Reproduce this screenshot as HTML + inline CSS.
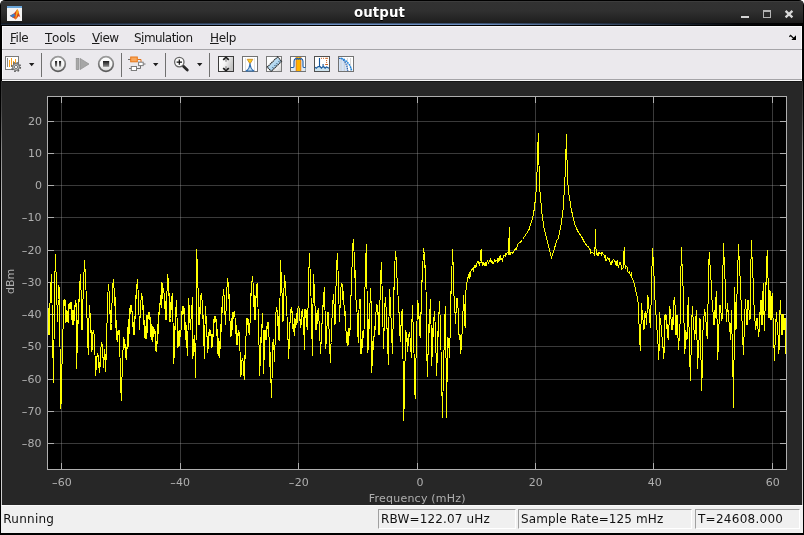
<!DOCTYPE html>
<html><head><meta charset="utf-8"><title>output</title><style>
html,body{margin:0;padding:0;}
body{width:804px;height:535px;overflow:hidden;background:#fff;position:relative;font-family:"DejaVu Sans","Liberation Sans",sans-serif;}
#win{will-change:transform;position:absolute;left:0;top:0;width:804px;height:535px;background:#000;border-radius:5px 5px 0 0;overflow:hidden;}
#title{position:absolute;left:1px;top:1px;width:802px;height:22px;background:linear-gradient(#484848 0,#323232 1px,#303030 10px,#222 19px,#1b1b1b 22px);}
#tline{position:absolute;left:1px;top:23px;width:802px;height:1px;background:linear-gradient(to right,rgba(63,86,118,.3) 0,rgba(63,86,118,1) 40%,rgba(63,86,118,1) 60%,rgba(63,86,118,.05) 92%,rgba(63,86,118,0) 100%);}
#tline2{position:absolute;left:1px;top:24px;width:802px;height:1px;background:linear-gradient(to right,rgba(110,143,192,.3) 0,rgba(110,143,192,1) 40%,rgba(110,143,192,1) 60%,rgba(110,143,192,.05) 92%,rgba(110,143,192,0) 100%);}
#ttext{position:absolute;left:0;top:5.4px;text-shadow:0 1px 0 #000;width:804px;text-align:center;color:#fff;font-weight:bold;font-size:13.33px;line-height:16px;letter-spacing:0.1px;text-indent:-45px}
#menu{position:absolute;left:2px;top:26px;width:800px;height:23px;background:#ebe9ed;box-shadow:inset 1px 1px 0 #f8f8fa,inset -1px 0 0 #f8f8fa;}
#menuline{position:absolute;left:2px;top:49px;width:800px;height:1px;background:#a5a4a8;}
.mi{position:absolute;top:5px;font-size:12px;line-height:14px;color:#1a1a1a;white-space:pre;}
.mi u{text-decoration:underline;text-underline-offset:1px;}
#tb{position:absolute;left:2px;top:50px;width:800px;height:29px;background:#ebe9ed;box-shadow:inset 1px 0 0 #f8f8fa,inset -1px 0 0 #f8f8fa;}
#tbline{position:absolute;left:2px;top:79px;width:800px;height:1px;background:#a5a4a8;}
#tbline2{position:absolute;left:2px;top:80px;width:800px;height:1px;background:#f8f8f8;}
.sep{position:absolute;top:3px;width:1px;height:24px;background:#707070;}
#panel{position:absolute;left:2px;top:81px;width:800px;height:424px;background:#272727;border-top:1px solid #161616;box-sizing:border-box}
#pl{position:absolute;left:1px;top:81px;width:1px;height:424px;background:linear-gradient(#2c2c2c 0,#484848 30px,#8a8a8a 70px,#c4c4c4 130px,#d0d0d0 180px,#d0d0d0 100%);}
#pr{position:absolute;left:802px;top:81px;width:1px;height:424px;background:linear-gradient(#2c2c2c 0,#484848 30px,#8a8a8a 70px,#c4c4c4 130px,#d0d0d0 180px,#d0d0d0 100%);}
#status{position:absolute;left:1px;top:505px;width:802px;height:28px;background:#f0f0f0;border-top:1px solid #fafafa;box-sizing:border-box;}
.sb{position:absolute;top:3px;height:20px;box-sizing:border-box;border:1px solid;border-color:#a0a0a0 #fff #fff #a0a0a0;font-size:12px;line-height:14px;color:#111;white-space:pre;padding:2px 0 0 2px;}
#run{position:absolute;left:2.3px;top:6px;font-size:12px;line-height:14px;color:#111;letter-spacing:0.25px}
svg{position:absolute;left:0;top:0;}
</style></head>
<body><div id="win">
<div id="title"></div><div id="tline"></div><div id="tline2"></div><div id="ttext">output</div>
<div id="menu">
<span class="mi" style="left:8px;letter-spacing:-0.45px"><u>F</u>ile</span>
<span class="mi" style="left:43px;font-kerning:none;letter-spacing:-0.25px"><u>T</u>ools</span>
<span class="mi" style="left:90px;letter-spacing:-0.45px"><u>V</u>iew</span>
<span class="mi" style="left:132px;letter-spacing:-0.55px">S<u>i</u>mulation</span>
<span class="mi" style="left:208px;letter-spacing:-0.3px"><u>H</u>elp</span>
</div><div id="menuline"></div>
<div id="tb">
<div class="sep" style="left:39px"></div><div class="sep" style="left:119px"></div><div class="sep" style="left:163px"></div><div class="sep" style="left:207px"></div>
</div><div id="tbline"></div><div id="tbline2"></div>
<div id="panel"></div><div id="pl"></div><div id="pr"></div>
<svg width="804" height="535" viewBox="0 0 804 535" shape-rendering="crispEdges"><style>.tk{font-family:"DejaVu Sans","Liberation Sans",sans-serif;font-size:11px;fill:#afafaf;}</style><rect x="47" y="96" width="740" height="374" fill="#000"/><line x1="61.5" y1="96" x2="61.5" y2="469" stroke="#afafaf" stroke-opacity="0.33"/><line x1="180.5" y1="96" x2="180.5" y2="469" stroke="#afafaf" stroke-opacity="0.33"/><line x1="298.5" y1="96" x2="298.5" y2="469" stroke="#afafaf" stroke-opacity="0.33"/><line x1="417.5" y1="96" x2="417.5" y2="469" stroke="#afafaf" stroke-opacity="0.33"/><line x1="535.5" y1="96" x2="535.5" y2="469" stroke="#afafaf" stroke-opacity="0.33"/><line x1="653.5" y1="96" x2="653.5" y2="469" stroke="#afafaf" stroke-opacity="0.33"/><line x1="772.5" y1="96" x2="772.5" y2="469" stroke="#afafaf" stroke-opacity="0.33"/><line x1="47" y1="443.5" x2="786" y2="443.5" stroke="#afafaf" stroke-opacity="0.33"/><line x1="47" y1="411.5" x2="786" y2="411.5" stroke="#afafaf" stroke-opacity="0.33"/><line x1="47" y1="379.5" x2="786" y2="379.5" stroke="#afafaf" stroke-opacity="0.33"/><line x1="47" y1="346.5" x2="786" y2="346.5" stroke="#afafaf" stroke-opacity="0.33"/><line x1="47" y1="314.5" x2="786" y2="314.5" stroke="#afafaf" stroke-opacity="0.33"/><line x1="47" y1="282.5" x2="786" y2="282.5" stroke="#afafaf" stroke-opacity="0.33"/><line x1="47" y1="250.5" x2="786" y2="250.5" stroke="#afafaf" stroke-opacity="0.33"/><line x1="47" y1="217.5" x2="786" y2="217.5" stroke="#afafaf" stroke-opacity="0.33"/><line x1="47" y1="185.5" x2="786" y2="185.5" stroke="#afafaf" stroke-opacity="0.33"/><line x1="47" y1="153.5" x2="786" y2="153.5" stroke="#afafaf" stroke-opacity="0.33"/><line x1="47" y1="121.5" x2="786" y2="121.5" stroke="#afafaf" stroke-opacity="0.33"/><line x1="61.5" y1="96" x2="61.5" y2="103" stroke="#afafaf"/><line x1="61.5" y1="463" x2="61.5" y2="470" stroke="#afafaf"/><line x1="180.5" y1="96" x2="180.5" y2="103" stroke="#afafaf"/><line x1="180.5" y1="463" x2="180.5" y2="470" stroke="#afafaf"/><line x1="298.5" y1="96" x2="298.5" y2="103" stroke="#afafaf"/><line x1="298.5" y1="463" x2="298.5" y2="470" stroke="#afafaf"/><line x1="417.5" y1="96" x2="417.5" y2="103" stroke="#afafaf"/><line x1="417.5" y1="463" x2="417.5" y2="470" stroke="#afafaf"/><line x1="535.5" y1="96" x2="535.5" y2="103" stroke="#afafaf"/><line x1="535.5" y1="463" x2="535.5" y2="470" stroke="#afafaf"/><line x1="653.5" y1="96" x2="653.5" y2="103" stroke="#afafaf"/><line x1="653.5" y1="463" x2="653.5" y2="470" stroke="#afafaf"/><line x1="772.5" y1="96" x2="772.5" y2="103" stroke="#afafaf"/><line x1="772.5" y1="463" x2="772.5" y2="470" stroke="#afafaf"/><line x1="47" y1="443.5" x2="54" y2="443.5" stroke="#afafaf"/><line x1="780" y1="443.5" x2="787" y2="443.5" stroke="#afafaf"/><line x1="47" y1="411.5" x2="54" y2="411.5" stroke="#afafaf"/><line x1="780" y1="411.5" x2="787" y2="411.5" stroke="#afafaf"/><line x1="47" y1="379.5" x2="54" y2="379.5" stroke="#afafaf"/><line x1="780" y1="379.5" x2="787" y2="379.5" stroke="#afafaf"/><line x1="47" y1="346.5" x2="54" y2="346.5" stroke="#afafaf"/><line x1="780" y1="346.5" x2="787" y2="346.5" stroke="#afafaf"/><line x1="47" y1="314.5" x2="54" y2="314.5" stroke="#afafaf"/><line x1="780" y1="314.5" x2="787" y2="314.5" stroke="#afafaf"/><line x1="47" y1="282.5" x2="54" y2="282.5" stroke="#afafaf"/><line x1="780" y1="282.5" x2="787" y2="282.5" stroke="#afafaf"/><line x1="47" y1="250.5" x2="54" y2="250.5" stroke="#afafaf"/><line x1="780" y1="250.5" x2="787" y2="250.5" stroke="#afafaf"/><line x1="47" y1="217.5" x2="54" y2="217.5" stroke="#afafaf"/><line x1="780" y1="217.5" x2="787" y2="217.5" stroke="#afafaf"/><line x1="47" y1="185.5" x2="54" y2="185.5" stroke="#afafaf"/><line x1="780" y1="185.5" x2="787" y2="185.5" stroke="#afafaf"/><line x1="47" y1="153.5" x2="54" y2="153.5" stroke="#afafaf"/><line x1="780" y1="153.5" x2="787" y2="153.5" stroke="#afafaf"/><line x1="47" y1="121.5" x2="54" y2="121.5" stroke="#afafaf"/><line x1="780" y1="121.5" x2="787" y2="121.5" stroke="#afafaf"/><polyline fill="none" stroke="#ffff00" stroke-width="1" stroke-linejoin="miter" points="47.5,300.0 47.5,300.0 48.0,307.7 48.5,326.2 49.0,335.0 49.0,335.0 49.5,326.8 50.0,303.2 50.5,302.2 51.0,282.7 51.4,273.8 51.5,279.7 52.0,302.8 52.5,340.2 53.0,357.6 53.4,382.6 53.5,376.4 54.0,340.0 54.5,311.8 55.0,271.6 55.3,253.9 55.5,260.9 56.0,271.5 56.5,299.9 57.0,305.0 57.5,322.0 57.5,322.0 58.0,305.2 58.5,299.5 59.0,285.0 59.0,285.0 59.5,322.0 60.0,346.9 60.5,385.3 60.9,408.9 61.0,404.6 61.5,392.1 62.0,363.8 62.5,358.9 63.0,329.1 63.5,320.2 64.0,300.0 64.0,300.0 64.5,306.3 65.0,299.1 65.5,322.7 66.0,309.8 66.5,321.6 67.0,322.0 67.0,322.0 67.5,321.7 68.0,310.6 68.5,323.1 69.0,304.1 69.5,309.1 70.0,303.0 70.0,303.0 70.5,309.4 71.0,301.6 71.5,320.0 72.0,310.0 72.5,324.1 73.0,325.0 73.0,325.0 73.5,324.3 74.0,310.5 74.5,320.8 75.0,305.5 75.5,305.9 76.0,300.0 76.0,300.0 76.4,368.7 76.5,367.0 77.0,350.1 77.5,352.5 78.0,319.8 78.5,323.6 79.0,300.3 79.5,301.2 80.0,281.6 80.4,273.8 80.5,278.2 81.0,289.5 81.5,316.6 82.0,330.0 82.0,330.0 82.5,320.7 83.0,299.4 83.5,294.9 84.0,272.6 84.5,263.4 84.6,259.9 85.0,268.1 85.5,286.9 86.0,289.7 86.5,317.4 87.0,317.5 87.5,339.1 88.0,348.4 88.2,354.8 88.5,344.0 89.0,318.2 89.4,304.6 89.5,307.4 90.0,312.7 90.5,332.7 91.0,329.9 91.5,348.7 91.8,352.0 92.0,348.3 92.5,349.8 93.0,331.8 93.5,333.7 93.8,330.1 94.0,333.8 94.5,351.1 95.0,355.2 95.5,372.6 95.7,375.7 96.0,370.1 96.5,369.7 97.0,356.1 97.5,356.1 97.7,353.2 98.0,354.6 98.5,367.6 99.0,362.2 99.5,372.4 99.7,373.0 100.0,366.1 100.5,367.1 101.0,347.3 101.5,345.6 101.7,341.9 102.0,344.1 102.5,356.9 103.0,356.5 103.5,366.4 103.7,367.7 104.0,360.0 104.5,354.2 104.7,348.8 105.0,353.1 105.5,368.1 105.7,372.0 106.0,360.5 106.5,350.5 107.0,323.1 107.5,314.3 108.0,291.9 108.3,283.7 108.5,287.9 109.0,290.2 109.5,314.4 110.0,309.8 110.5,324.6 111.0,330.0 111.0,330.0 111.5,323.5 112.0,303.1 112.5,299.7 113.0,282.9 113.3,278.8 113.5,283.9 114.0,287.5 114.5,305.5 115.0,295.7 115.5,327.7 116.0,319.6 116.5,335.3 117.0,340.0 117.0,340.0 117.5,340.8 118.0,331.4 118.5,334.7 119.0,330.0 119.1,330.0 119.5,346.7 120.0,357.4 120.5,379.0 121.0,392.8 121.2,400.5 121.5,393.9 122.0,377.3 122.5,371.2 123.0,350.7 123.5,343.9 123.7,337.4 124.0,338.4 124.5,347.5 125.0,343.1 125.5,358.2 126.0,356.2 126.2,359.8 126.5,359.2 127.0,347.2 127.5,348.7 128.0,326.9 128.5,346.8 129.0,319.1 129.5,333.9 130.0,308.0 130.5,314.1 131.0,305.0 131.0,305.0 131.5,311.5 132.0,310.4 132.5,326.9 133.0,321.4 133.5,334.4 134.0,335.0 134.0,335.0 134.5,330.6 135.0,315.7 135.5,318.6 136.0,294.6 136.5,298.8 137.0,283.7 137.5,278.8 137.5,278.8 138.0,289.2 138.5,312.0 139.0,315.3 139.5,330.0 139.5,330.0 140.0,318.3 140.5,316.9 141.0,300.4 141.5,293.3 141.5,293.3 142.0,295.6 142.5,309.6 143.0,304.6 143.5,325.3 144.0,319.5 144.5,333.9 145.0,338.0 145.0,338.0 145.5,339.2 146.0,326.2 146.5,338.8 147.0,315.0 147.5,333.3 148.0,315.3 148.5,319.1 149.0,312.0 149.0,312.0 149.5,320.0 150.0,316.7 150.5,336.8 151.0,323.2 151.5,338.9 152.0,340.0 152.0,340.0 152.5,342.3 153.0,326.4 153.5,337.1 154.0,329.6 154.2,330.0 154.5,334.0 155.0,330.7 155.5,350.6 156.0,345.5 156.4,352.4 156.5,351.8 157.0,341.7 157.5,342.6 158.0,323.8 158.5,333.6 159.0,313.3 159.5,314.2 160.0,303.0 160.0,303.0 160.5,303.7 161.0,295.2 161.5,307.5 162.0,282.2 162.5,299.2 163.0,288.0 163.5,288.0 163.5,288.0 164.0,292.5 164.5,309.0 165.0,300.6 165.5,315.9 166.0,320.0 166.0,320.0 166.5,310.7 167.0,291.0 167.5,284.3 167.8,274.2 168.0,277.4 168.5,295.5 169.0,292.0 169.5,312.9 170.0,322.0 170.0,322.0 170.5,318.5 171.0,302.4 171.5,309.9 172.0,295.9 172.4,293.5 172.5,299.4 173.0,321.7 173.5,350.6 173.8,363.7 174.0,358.0 174.5,349.3 175.0,326.1 175.5,330.1 176.0,307.5 176.5,300.0 176.5,300.0 177.0,317.4 177.5,341.7 177.7,347.8 178.0,345.1 178.5,346.0 179.0,330.9 179.5,345.9 180.0,330.2 180.5,337.0 181.0,330.0 181.0,330.0 181.5,328.3 182.0,311.0 182.5,314.5 183.0,306.0 183.0,306.0 183.5,313.5 184.0,307.5 184.5,330.1 185.0,321.4 185.5,339.6 186.0,324.8 186.5,347.7 187.0,342.9 187.5,354.4 187.7,355.8 188.0,331.4 188.5,298.0 188.5,298.0 189.0,304.5 189.5,322.9 190.0,319.4 190.5,330.0 190.5,330.0 191.0,319.3 191.5,318.3 192.0,304.9 192.5,300.5 192.7,296.7 192.9,358.8 193.0,356.8 193.5,350.7 194.0,339.4 194.4,334.7 194.5,340.5 195.0,351.8 195.5,370.6 195.8,377.7 196.0,344.8 196.5,265.4 196.6,248.9 197.0,258.5 197.5,285.5 198.0,287.4 198.5,310.6 199.0,325.0 199.0,325.0 199.5,320.5 200.0,307.5 200.5,313.7 201.0,295.4 201.5,295.3 201.6,293.3 202.0,299.9 202.5,319.2 203.0,314.5 203.5,345.4 204.0,346.0 204.4,358.8 204.5,354.2 205.0,325.5 205.4,305.6 205.5,308.2 206.0,314.9 206.5,335.9 207.0,335.0 207.5,351.1 207.6,352.8 208.0,346.1 208.5,348.8 209.0,331.7 209.5,336.2 209.9,330.0 210.0,330.1 210.5,335.8 211.0,333.1 211.5,348.2 212.0,343.2 212.3,346.8 212.5,346.2 213.0,334.5 213.5,336.8 214.0,319.4 214.5,323.3 215.0,316.0 215.0,316.0 215.5,322.3 216.0,318.5 216.5,336.4 217.0,327.9 217.5,353.8 218.0,337.4 218.5,355.7 219.0,352.6 219.3,357.8 219.5,355.2 220.0,340.6 220.5,348.8 221.0,324.4 221.5,331.5 222.0,306.8 222.5,313.2 223.0,296.0 223.5,289.3 223.5,289.3 224.0,294.2 224.5,314.8 225.0,314.3 225.5,325.0 225.5,325.0 226.0,311.2 226.5,309.8 227.0,287.0 227.5,278.4 227.5,278.4 228.0,281.0 228.5,299.3 229.0,293.9 229.5,304.0 229.5,304.0 230.0,320.5 230.4,336.9 230.5,336.7 231.0,330.6 231.5,336.4 232.0,318.0 232.5,330.4 233.0,312.3 233.5,319.1 234.0,312.0 234.2,311.2 234.5,316.6 235.0,317.2 235.5,334.4 236.0,324.1 236.5,340.9 237.0,345.0 237.0,345.0 237.5,344.6 238.0,332.9 238.5,335.5 238.9,330.0 239.0,331.5 239.5,347.8 240.0,351.1 240.5,371.8 240.8,376.7 241.0,373.5 241.5,375.4 242.0,360.0 242.5,357.9 242.5,357.9 243.0,360.5 243.5,374.6 244.0,375.6 244.2,379.7 244.5,374.5 245.0,355.0 245.5,359.3 246.0,335.7 246.5,331.8 247.0,318.0 247.0,318.0 247.5,325.4 248.0,318.8 248.5,333.3 249.0,329.0 249.5,335.0 249.5,335.0 250.0,322.7 250.5,322.6 251.0,292.6 251.5,296.4 252.0,281.0 252.3,276.2 252.5,280.7 253.0,281.9 253.5,306.5 254.0,294.5 254.5,314.2 255.0,320.0 255.0,320.0 255.5,314.3 256.0,296.1 256.5,298.0 257.0,284.7 257.1,283.3 257.5,300.3 258.0,307.3 258.5,343.6 259.0,344.5 259.5,370.4 259.7,375.7 260.0,366.7 260.5,361.4 261.0,336.9 261.5,343.3 262.0,323.9 262.5,318.0 262.7,312.6 263.0,328.2 263.5,362.8 263.7,373.7 264.0,360.8 264.5,345.1 264.9,330.0 265.0,330.0 265.5,339.7 266.0,340.0 266.0,340.0 266.5,337.7 267.0,325.8 267.5,328.6 268.0,322.0 268.0,322.0 268.5,334.6 269.0,336.4 269.5,366.9 270.0,351.5 270.5,378.3 271.0,382.5 271.5,396.0 271.6,397.6 272.0,379.1 272.5,365.4 273.0,342.1 273.1,338.6 273.5,346.8 274.0,350.0 274.5,361.0 274.6,361.7 275.0,345.0 275.5,334.5 276.0,312.0 276.2,306.6 276.5,311.5 277.0,309.7 277.5,326.4 278.0,315.7 278.5,339.9 279.0,330.0 279.5,340.6 279.6,340.8 280.0,299.1 280.4,260.2 280.5,263.2 281.0,271.3 281.5,290.1 282.0,292.8 282.5,311.8 283.0,322.0 283.0,322.0 283.5,311.4 284.0,288.5 284.5,279.0 284.6,275.4 285.0,280.3 285.5,292.9 286.0,295.7 286.5,305.0 286.5,305.0 287.0,316.1 287.5,339.7 288.0,338.2 288.5,356.7 288.6,358.8 289.0,348.8 289.5,348.4 290.0,322.7 290.5,322.7 291.0,308.7 291.1,307.2 291.5,313.1 292.0,310.5 292.5,329.1 293.0,323.7 293.5,331.9 293.5,331.9 294.0,328.8 294.5,335.9 295.0,318.5 295.5,328.3 296.0,325.0 296.0,325.0 296.5,324.9 297.0,312.9 297.5,323.4 298.0,307.8 298.5,307.2 298.5,307.2 299.0,308.1 299.5,320.5 300.0,318.6 300.5,328.0 300.5,328.0 301.0,320.7 301.5,324.6 302.0,310.9 302.5,309.2 302.5,309.2 303.0,316.9 303.5,334.6 304.0,335.1 304.5,349.8 304.5,349.8 305.0,309.2 305.0,309.2 305.5,317.8 306.0,309.1 306.5,326.9 307.0,324.1 307.5,330.0 307.5,330.0 308.0,308.4 308.5,294.5 309.0,267.9 309.5,253.3 309.5,253.3 310.0,267.8 310.5,295.5 311.0,296.3 311.5,332.0 312.0,339.3 312.4,355.8 312.5,348.3 313.0,305.1 313.4,274.2 313.5,276.8 314.0,283.4 314.5,302.5 315.0,305.5 315.5,321.9 316.0,330.0 316.0,330.0 316.5,328.0 317.0,312.9 317.5,323.7 318.0,309.8 318.4,309.2 318.5,312.3 319.0,320.6 319.5,337.3 320.0,341.4 320.4,353.8 320.5,353.0 321.0,341.8 321.5,344.2 322.0,322.8 322.5,324.4 323.0,305.7 323.5,306.5 324.0,291.8 324.4,287.3 324.5,292.6 325.0,310.3 325.5,336.7 325.8,348.8 326.0,344.5 326.5,339.1 327.0,325.7 327.5,323.2 328.0,312.0 328.0,312.0 328.5,325.2 329.0,328.8 329.5,347.8 330.0,354.0 330.3,362.7 330.5,359.2 331.0,344.0 331.5,342.5 332.0,318.4 332.5,316.2 333.0,299.9 333.3,294.1 333.5,299.3 334.0,303.6 334.5,320.4 335.0,325.0 335.0,325.0 335.5,311.3 336.0,286.4 336.5,284.3 337.0,260.1 337.3,253.3 337.5,260.3 338.0,269.6 338.5,299.2 339.0,304.0 339.5,322.0 339.5,322.0 340.0,307.9 340.5,304.2 341.0,287.5 341.3,283.7 341.5,286.8 342.0,283.3 342.5,300.1 343.0,290.9 343.5,303.1 344.0,305.0 344.0,305.0 344.5,315.8 345.0,309.9 345.5,330.6 346.0,330.8 346.5,340.6 346.7,342.8 347.0,339.9 347.5,346.1 348.0,332.2 348.5,344.7 349.0,327.7 349.5,336.1 350.0,330.0 350.0,330.0 350.5,317.2 351.0,295.5 351.5,295.0 352.0,267.5 352.5,264.4 353.0,243.2 353.2,239.0 353.5,246.5 354.0,251.3 354.5,277.7 355.0,269.5 355.5,290.5 356.0,300.0 356.0,300.0 356.5,311.3 357.0,312.2 357.5,333.9 358.0,337.1 358.2,342.8 358.5,332.8 359.0,310.0 359.2,302.6 359.5,304.0 360.0,298.9 360.4,299.7 360.5,309.5 361.0,353.8 361.0,353.8 361.5,352.3 362.0,338.6 362.5,347.6 363.0,330.9 363.5,337.6 364.0,330.0 364.0,330.0 364.5,315.5 365.0,287.1 365.5,276.8 366.0,253.8 366.3,243.9 366.5,258.6 367.0,289.3 367.5,328.5 367.9,352.8 368.0,350.3 368.5,341.7 369.0,319.1 369.5,329.4 370.0,303.2 370.5,298.4 370.9,287.7 371.0,301.0 371.5,372.7 371.5,372.7 372.0,364.2 372.5,365.9 373.0,341.3 373.5,350.4 374.0,336.6 374.5,335.0 374.5,335.0 375.0,326.5 375.5,329.9 376.0,312.4 376.5,311.0 376.9,303.6 377.0,304.4 377.5,315.2 378.0,311.5 378.5,331.2 379.0,335.0 379.0,335.0 379.5,321.1 380.0,300.1 380.5,292.7 381.0,270.5 381.3,262.2 381.5,271.3 382.0,284.0 382.5,318.0 383.0,327.3 383.5,348.8 383.5,348.8 384.0,331.6 384.5,324.1 385.0,303.7 385.3,296.7 385.5,302.2 386.0,306.6 386.5,328.8 387.0,326.9 387.5,349.8 388.0,354.4 388.4,364.7 388.5,357.8 389.0,316.9 389.4,288.7 389.5,291.7 390.0,296.8 390.5,317.3 391.0,317.3 391.5,341.4 392.0,342.5 392.4,353.8 392.5,350.7 393.0,329.1 393.5,322.0 394.0,287.8 394.5,288.7 395.0,261.1 395.4,250.9 395.5,253.5 396.0,256.8 396.5,276.0 397.0,278.2 397.5,290.0 397.5,290.0 398.0,295.4 398.5,313.0 399.0,311.1 399.5,332.7 400.0,336.3 400.2,341.8 400.5,338.4 401.0,325.5 401.5,323.9 402.0,311.3 402.2,308.6 402.5,331.1 403.0,359.3 403.5,400.9 403.8,421.0 404.0,409.8 404.5,392.7 405.0,361.4 405.5,343.7 405.8,330.0 406.0,331.9 406.5,342.1 407.0,337.7 407.5,350.4 407.7,351.8 408.0,346.3 408.5,345.8 409.0,334.6 409.5,332.3 409.5,332.3 410.0,337.3 410.5,350.4 411.0,351.6 411.3,357.8 411.5,348.5 412.0,319.4 412.3,304.6 412.5,312.4 413.0,321.6 413.5,350.8 414.0,352.9 414.5,380.9 415.0,394.7 415.1,398.6 415.5,385.9 416.0,358.3 416.5,354.3 417.0,320.7 417.5,308.8 417.7,299.7 418.0,302.1 418.5,319.3 419.0,315.0 419.5,333.3 420.0,335.7 420.1,337.9 420.5,329.7 421.0,311.9 421.5,313.8 422.0,280.0 422.5,281.8 423.0,260.8 423.5,253.5 423.7,247.9 424.0,251.8 424.5,267.8 425.0,264.6 425.5,282.8 426.0,290.0 426.0,290.0 426.5,329.4 427.0,360.6 427.2,376.7 427.5,372.2 428.0,354.2 428.5,355.4 429.0,324.2 429.5,333.3 430.0,308.9 430.5,301.8 430.6,298.7 431.0,323.5 431.5,359.4 431.6,365.7 432.0,356.5 432.5,356.0 433.0,328.0 433.5,337.3 434.0,317.2 434.5,312.8 434.6,310.6 435.0,321.2 435.5,345.0 436.0,352.8 436.5,372.8 436.6,375.7 437.0,362.9 437.5,359.6 438.0,330.9 438.5,336.6 439.0,312.1 439.5,303.9 439.6,300.6 440.0,314.2 440.5,344.7 441.0,349.6 441.5,384.9 442.0,395.7 442.5,418.0 442.5,418.0 443.0,391.6 443.5,379.2 444.0,350.5 444.5,330.0 444.5,330.0 445.0,314.5 445.5,308.6 445.6,305.6 446.0,358.1 446.4,418.0 446.5,413.7 447.0,383.2 447.5,362.5 447.9,337.1 448.0,337.6 448.5,347.0 449.0,347.7 449.5,357.8 449.5,357.8 450.0,338.3 450.5,329.8 451.0,291.9 451.5,292.8 452.0,265.6 452.5,249.3 452.5,249.3 453.0,261.1 453.5,283.9 454.0,296.0 454.0,296.0 454.5,307.8 455.0,313.1 455.5,323.9 455.5,323.9 456.0,311.6 456.5,313.0 457.0,298.5 457.1,297.7 457.5,307.9 458.0,307.9 458.5,327.2 459.0,335.0 459.0,335.0 459.5,339.6 460.0,334.4 460.5,354.0 461.0,339.5 461.5,350.4 461.9,348.8 462.0,334.0 462.0,334.0 462.7,318.3 463.4,302.7 463.5,294.7 463.7,297.0 464.2,307.2 464.9,323.0 465.1,327.9 465.1,327.9 465.6,306.8 466.0,290.0 466.3,287.2 467.0,281.9 467.5,280.1 467.8,277.3 468.5,275.4 469.2,278.8 469.9,271.6 470.0,277.2 470.6,272.2 471.4,270.1 472.1,268.8 472.8,269.0 473.5,271.5 474.2,265.9 475.0,267.6 475.0,268.0 475.7,265.6 476.4,266.2 477.1,262.2 477.8,261.6 478.6,262.1 479.3,264.8 480.0,262.5 480.0,261.7 480.7,254.6 481.1,249.0 481.4,252.4 482.2,265.5 482.2,265.4 482.9,262.1 483.6,264.3 484.3,263.8 485.0,266.1 485.0,265.1 485.8,261.8 486.5,266.4 487.2,260.2 487.9,262.0 488.6,264.2 489.4,259.8 490.1,261.9 490.8,258.5 491.5,262.7 492.2,263.2 493.0,261.6 493.7,263.5 494.4,259.4 495.1,261.8 495.8,260.9 496.6,260.6 497.3,259.5 497.3,262.2 498.0,262.5 498.7,258.8 499.4,259.7 500.2,255.1 500.9,259.2 501.6,258.4 502.3,260.4 503.0,257.8 503.8,255.2 504.5,255.2 505.2,255.9 505.9,252.9 506.0,254.6 506.6,253.3 507.4,252.8 508.1,252.4 508.6,255.1 508.8,245.1 509.3,227.0 509.5,235.7 510.0,255.5 510.2,252.1 511.0,252.9 511.7,252.7 512.4,253.4 513.1,252.5 513.8,252.0 514.6,249.0 514.7,249.5 515.3,248.5 516.0,249.6 516.7,249.0 517.4,244.8 518.2,243.9 518.9,243.2 519.6,242.3 520.3,242.4 521.0,241.4 521.8,240.5 522.2,239.9 522.5,239.5 523.2,238.4 523.9,237.3 524.6,236.2 525.4,235.2 526.1,234.1 526.8,233.0 527.5,231.9 528.2,230.8 528.8,230.0 529.0,229.5 529.7,227.2 530.4,225.0 531.1,222.7 531.8,220.5 532.4,218.7 532.6,217.9 533.3,214.2 534.0,210.6 534.6,207.5 534.7,206.2 535.4,198.1 536.0,191.8 536.2,188.8 536.9,175.4 536.9,175.0 537.5,160.0 537.6,156.2 537.9,145.0 538.3,134.9 538.4,133.0 538.6,145.0 538.9,160.0 539.0,165.3 539.3,175.0 539.8,186.0 540.0,191.8 540.5,197.2 541.2,205.3 541.8,212.0 541.9,212.9 542.6,218.0 543.4,223.1 544.0,227.7 544.1,228.0 544.8,231.0 545.5,234.1 546.2,237.1 546.7,239.0 547.0,240.0 547.7,242.8 548.4,245.7 549.1,248.5 549.8,251.3 550.6,254.1 551.3,256.9 551.5,257.8 552.0,256.2 552.7,253.8 553.4,251.5 554.2,249.1 554.9,246.8 555.6,244.5 556.3,242.1 557.0,239.9 557.0,239.9 557.8,239.3 558.2,239.0 558.5,237.6 559.2,234.0 559.9,230.4 560.6,226.8 560.9,225.5 561.4,222.2 562.1,217.1 562.8,211.9 563.1,209.8 563.5,203.5 564.2,192.7 564.3,191.8 565.0,177.9 565.1,175.0 565.7,160.5 565.7,160.0 566.1,146.0 566.4,136.9 566.5,133.9 566.7,146.0 567.0,160.0 567.1,163.6 567.5,175.0 567.8,181.3 568.4,191.8 568.6,192.8 569.3,197.1 570.0,201.4 570.7,205.7 571.4,209.8 571.4,210.0 572.2,213.2 572.9,216.4 573.6,219.6 574.3,222.8 574.4,223.2 575.0,224.7 575.8,226.5 576.5,228.2 577.2,229.9 577.7,231.1 577.9,231.4 578.6,232.5 579.4,233.6 580.1,234.6 580.8,235.7 581.5,236.8 582.2,237.8 582.2,237.9 583.0,239.4 583.7,240.9 584.4,242.4 584.4,242.4 585.1,243.4 585.8,244.4 586.6,245.3 587.3,246.8 588.0,246.4 588.7,246.4 589.4,249.1 590.2,249.9 590.6,251.3 590.9,253.0 591.6,252.5 592.3,252.3 593.0,253.2 593.8,254.0 594.5,252.0 594.8,255.6 595.2,240.3 595.5,229.5 595.9,245.4 596.2,254.6 596.6,254.7 597.4,253.6 598.1,256.3 598.8,252.4 599.5,252.6 600.2,253.7 601.0,253.5 601.7,254.9 601.8,252.9 602.4,252.9 603.1,254.4 603.8,254.6 604.6,256.9 605.3,255.0 606.0,261.4 606.7,260.1 607.4,257.3 608.2,258.5 608.9,259.7 609.3,260.0 609.6,258.5 610.3,263.8 611.0,265.1 611.8,261.7 612.5,262.1 613.2,259.6 613.9,260.0 614.6,261.9 615.4,261.7 616.1,265.9 616.8,261.5 617.5,260.8 618.2,267.6 619.0,264.9 619.2,262.3 619.7,265.2 620.4,261.8 621.1,265.6 621.8,268.9 622.6,268.4 623.2,267.4 623.3,263.0 624.0,251.7 624.2,247.0 624.7,260.4 625.2,267.2 625.4,269.1 626.2,266.5 626.9,266.2 627.6,270.8 628.3,272.5 629.0,272.1 629.2,271.8 629.8,273.5 630.5,275.0 631.2,273.4 631.9,277.4 632.6,279.3 633.4,281.3 634.1,283.3 634.1,283.4 634.8,286.4 635.5,289.5 636.2,292.5 637.0,295.6 637.7,298.7 637.9,299.6 638.4,310.3 639.1,325.6 639.8,341.0 640.3,350.8 640.3,350.8 640.3,350.8 640.8,329.9 641.3,315.1 641.6,302.6 641.8,304.9 642.3,317.3 642.8,314.1 643.3,328.0 643.5,330.0 643.8,325.2 644.3,329.4 644.8,314.3 645.3,312.0 645.3,312.0 645.8,313.3 646.3,324.0 646.5,325.0 646.8,316.4 647.3,309.6 647.8,296.2 647.9,294.7 648.3,303.3 648.8,303.3 649.3,317.2 649.8,319.5 650.3,327.9 650.3,327.9 650.8,308.3 651.3,301.0 651.8,270.9 652.3,260.0 652.6,247.6 652.8,251.0 653.3,266.2 653.8,266.1 654.3,290.1 654.8,294.8 655.0,300.0 655.3,306.2 655.8,306.4 656.3,325.9 656.8,326.1 657.0,330.0 657.3,336.3 657.8,337.3 658.3,352.6 658.8,357.6 658.9,359.8 659.3,329.5 659.5,311.6 659.8,313.0 660.3,323.7 660.8,321.1 661.3,329.4 661.5,330.0 661.8,331.0 662.3,345.1 662.8,342.1 663.3,355.0 663.8,358.8 663.8,358.8 664.3,344.7 664.8,321.1 665.0,315.0 665.3,319.0 665.8,314.4 666.3,329.1 666.8,314.7 667.3,338.3 667.8,332.5 668.3,340.0 668.4,339.9 668.8,328.3 669.3,319.7 669.8,305.6 669.8,305.6 670.3,314.7 670.8,313.2 671.3,326.3 671.8,326.9 672.0,330.0 672.3,328.3 672.8,317.5 673.3,324.8 673.8,299.8 674.3,305.1 674.8,296.7 674.8,296.7 675.3,316.0 675.8,327.1 676.0,335.0 676.3,330.0 676.8,317.6 677.0,315.0 677.3,324.9 677.8,330.1 678.3,347.9 678.4,349.8 678.8,340.3 679.3,340.3 679.8,327.3 680.0,325.0 680.3,309.7 680.8,276.4 681.3,253.1 681.4,246.9 681.8,253.8 682.3,276.4 682.8,279.4 683.3,296.0 683.5,300.0 683.8,311.1 684.3,338.2 684.7,353.8 684.8,351.3 685.3,346.3 685.8,330.7 685.9,330.0 686.3,336.1 686.8,337.0 687.0,340.0 687.3,331.4 687.8,311.1 688.3,296.7 688.3,296.7 688.8,313.7 689.3,344.1 689.8,357.7 690.3,380.6 690.3,380.6 690.8,359.1 691.3,348.7 691.8,322.2 692.3,305.6 692.3,305.6 692.8,311.4 693.3,324.3 693.8,323.9 694.3,338.4 694.5,340.0 694.8,334.5 695.3,332.1 695.8,316.1 696.3,318.7 696.7,309.6 696.8,319.0 697.3,368.7 697.3,368.7 697.8,358.0 698.3,357.2 698.8,342.2 699.0,340.0 699.3,335.0 699.8,321.0 700.0,318.0 700.3,332.8 700.8,349.1 701.3,376.0 701.7,391.0 701.8,385.4 702.3,367.7 702.8,338.2 703.0,330.0 703.3,328.3 703.8,316.8 704.3,315.1 704.6,309.6 704.8,310.1 705.3,320.3 705.8,312.1 706.3,336.3 706.8,331.5 707.2,338.9 707.3,335.1 707.8,310.8 708.3,295.3 708.8,266.2 709.2,251.9 709.3,254.2 709.8,257.4 710.3,275.4 710.8,269.6 711.3,293.9 711.8,295.1 712.0,300.0 712.3,305.0 712.8,306.6 713.3,318.5 713.8,321.9 714.0,325.0 714.3,323.3 714.8,309.6 715.3,318.0 715.8,297.5 716.3,296.2 716.6,290.7 716.8,302.8 717.3,341.9 717.6,359.8 717.8,354.5 718.3,349.3 718.8,324.7 719.3,323.0 719.8,308.2 720.0,305.0 720.3,308.6 720.8,306.9 721.3,321.1 721.8,317.0 722.0,320.0 722.3,305.5 722.8,273.8 723.3,253.8 723.5,242.9 723.8,248.1 724.3,269.1 724.8,271.9 725.3,290.4 725.5,295.0 725.8,302.1 726.3,317.8 726.5,322.0 726.8,314.6 727.3,308.1 727.5,302.6 727.8,304.9 728.3,316.9 728.8,314.1 729.3,332.3 729.8,324.9 730.3,338.3 730.5,339.9 730.8,328.5 731.3,316.8 731.5,310.0 731.8,320.8 732.3,350.5 732.8,364.6 733.3,393.3 733.7,407.9 733.8,391.9 734.3,317.7 734.5,286.7 734.8,294.3 735.3,312.9 735.8,323.0 736.0,330.0 736.3,322.4 736.8,295.7 737.3,291.1 737.8,265.9 738.3,252.1 738.5,243.9 738.8,248.7 739.3,265.4 739.8,265.0 740.3,290.7 740.8,294.8 741.0,300.0 741.3,308.3 741.8,311.6 742.3,333.9 742.8,338.9 743.3,352.9 743.4,354.8 743.8,340.4 744.3,332.8 744.8,313.5 745.3,302.2 745.4,298.7 745.8,302.2 746.3,318.9 746.8,320.6 747.0,325.0 747.3,320.1 747.8,304.2 748.0,300.0 748.3,304.7 748.8,303.8 749.3,317.5 749.8,317.2 750.0,320.0 750.3,304.0 750.8,268.8 751.3,246.2 751.4,240.0 751.8,247.6 752.3,270.4 752.8,269.3 753.3,291.1 753.8,298.7 754.0,305.0 754.3,311.0 754.8,316.3 755.3,328.1 755.5,330.0 755.8,326.0 756.3,325.9 756.8,318.7 757.0,318.0 757.3,324.2 757.8,324.1 758.3,336.2 758.4,336.9 758.8,329.5 759.3,331.6 759.8,312.0 760.3,315.4 760.8,302.1 761.0,300.0 761.3,310.2 761.8,318.4 762.0,325.0 762.3,317.1 762.8,296.2 763.3,282.7 763.3,282.7 763.8,303.2 764.3,330.9 764.3,330.9 764.8,313.7 765.3,307.3 765.8,282.1 766.3,284.6 766.8,260.6 767.3,249.9 767.3,249.9 767.8,266.8 768.3,293.3 768.8,308.3 769.0,318.0 769.3,311.3 769.8,294.3 770.0,290.0 770.3,301.1 770.8,312.3 771.0,320.0 771.3,315.0 771.8,298.9 772.3,292.7 772.3,292.7 772.8,307.1 773.3,331.7 773.8,339.1 774.3,360.7 774.3,360.7 774.8,346.4 775.3,343.6 775.8,321.1 776.3,317.0 776.5,312.0 776.8,316.3 777.3,330.7 777.8,327.3 778.3,345.1 778.8,351.7 778.9,353.8 779.3,339.7 779.8,316.8 780.3,299.7 780.3,299.7 780.8,308.3 781.3,323.0 781.8,329.8 782.0,335.0 782.3,329.8 782.8,316.6 783.0,314.0 783.3,320.4 783.8,326.1 784.0,330.0 784.3,329.0 784.8,318.6 785.2,317.6 785.3,326.7 785.6,351.8 785.8,351.2 786.3,356.7"/><rect x="47.5" y="96.5" width="739" height="373" fill="none" stroke="#afafaf"/><text x="41.6" y="447.4" text-anchor="end" class="tk"><tspan textLength="6.1" lengthAdjust="spacingAndGlyphs">-</tspan>80</text><text x="41.6" y="415.4" text-anchor="end" class="tk"><tspan textLength="6.1" lengthAdjust="spacingAndGlyphs">-</tspan>70</text><text x="41.6" y="383.4" text-anchor="end" class="tk"><tspan textLength="6.1" lengthAdjust="spacingAndGlyphs">-</tspan>60</text><text x="41.6" y="350.4" text-anchor="end" class="tk"><tspan textLength="6.1" lengthAdjust="spacingAndGlyphs">-</tspan>50</text><text x="41.6" y="318.4" text-anchor="end" class="tk"><tspan textLength="6.1" lengthAdjust="spacingAndGlyphs">-</tspan>40</text><text x="41.6" y="286.4" text-anchor="end" class="tk"><tspan textLength="6.1" lengthAdjust="spacingAndGlyphs">-</tspan>30</text><text x="41.6" y="254.4" text-anchor="end" class="tk"><tspan textLength="6.1" lengthAdjust="spacingAndGlyphs">-</tspan>20</text><text x="41.6" y="221.4" text-anchor="end" class="tk"><tspan textLength="6.1" lengthAdjust="spacingAndGlyphs">-</tspan>10</text><text x="42.1" y="189.4" text-anchor="end" class="tk">0</text><text x="42.1" y="157.4" text-anchor="end" class="tk">10</text><text x="42.1" y="125.4" text-anchor="end" class="tk">20</text><text x="61.7" y="486" text-anchor="middle" class="tk"><tspan textLength="6.1" lengthAdjust="spacingAndGlyphs">-</tspan>60</text><text x="180.0" y="486" text-anchor="middle" class="tk"><tspan textLength="6.1" lengthAdjust="spacingAndGlyphs">-</tspan>40</text><text x="298.6" y="486" text-anchor="middle" class="tk"><tspan textLength="6.1" lengthAdjust="spacingAndGlyphs">-</tspan>20</text><text x="420.0" y="486" text-anchor="middle" class="tk">0</text><text x="535.7" y="486" text-anchor="middle" class="tk">20</text><text x="654.7" y="486" text-anchor="middle" class="tk">40</text><text x="772.8" y="486" text-anchor="middle" class="tk">60</text><text x="417.3" y="502" text-anchor="middle" class="tk" style="letter-spacing:0.22px">Frequency (mHz)</text><text transform="translate(13.9,281.4) rotate(-90)" text-anchor="middle" class="tk">dBm</text></svg>
<div id="status">
<div id="run">Running</div>
<div class="sb" style="left:377px;width:138px;letter-spacing:0.15px">RBW=122.07 uHz</div>
<div class="sb" style="left:517px;width:174px;letter-spacing:0.12px">Sample Rate=125 mHz</div>
<div class="sb" style="left:694px;width:105px;letter-spacing:0.27px">T=24608.000</div>
</div>
<svg width="804" height="535" viewBox="0 0 804 535" style="position:absolute;left:0;top:0">
<defs>
<linearGradient id="gbtn" x1="0" y1="0" x2="0" y2="1"><stop offset="0" stop-color="#ffffff"/><stop offset="0.6" stop-color="#f4f4f4"/><stop offset="1" stop-color="#d4d4d4"/></linearGradient>
<linearGradient id="gring" x1="0" y1="0" x2="0" y2="1"><stop offset="0" stop-color="#9c9c9c"/><stop offset="1" stop-color="#5c5c5c"/></linearGradient>
<linearGradient id="gsq" x1="0" y1="0" x2="0" y2="1"><stop offset="0" stop-color="#1a1a1a"/><stop offset="1" stop-color="#8a8a8a"/></linearGradient>
<linearGradient id="gbox" x1="0" y1="0" x2="1" y2="0.4"><stop offset="0" stop-color="#ffffff"/><stop offset="0.5" stop-color="#f6f6f6"/><stop offset="1" stop-color="#c4c4c4"/></linearGradient>
<linearGradient id="gbox2" x1="0" y1="0" x2="1" y2="1"><stop offset="0" stop-color="#ffffff"/><stop offset="0.6" stop-color="#fafafa"/><stop offset="1" stop-color="#cfcfcf"/></linearGradient>
<linearGradient id="grul" x1="0" y1="0" x2="1" y2="1"><stop offset="0" stop-color="#dceef9"/><stop offset="1" stop-color="#8cc4e8"/></linearGradient>
</defs>
<!-- 1 config icon -->
<rect x="5.5" y="56.5" width="13" height="13" fill="#fff" stroke="#7a7a7a"/>
<g shape-rendering="crispEdges"><rect x="7" y="58" width="1" height="9" fill="#8a8a8a"/><rect x="9" y="60" width="1" height="7" fill="#ffa51e"/><rect x="11" y="58" width="1" height="9" fill="#ffa51e"/><rect x="13" y="61" width="1" height="6" fill="#ffa51e"/><rect x="15" y="59" width="1" height="5" fill="#ffa51e"/></g>
<circle cx="16" cy="67" r="4.3" fill="none" stroke="#5e5e5e" stroke-width="1.6" stroke-dasharray="1.7 1.68"/>
<circle cx="16" cy="67" r="3.4" fill="#c6c6c6" stroke="#6a6a6a" stroke-width="1"/>
<circle cx="16" cy="67" r="1.6" fill="#fff" stroke="#606060" stroke-width="0.8"/>
<!-- dropdown arrows -->
<path d="M29 63h5.4l-2.7 3.2z M153 63h5.4l-2.7 3.2z M197 63h5.4l-2.7 3.2z" fill="#1e1e1e"/>
<!-- pause -->
<circle cx="58" cy="64" r="7.3" fill="url(#gbtn)" stroke="url(#gring)" stroke-width="1.7"/>
<rect x="55" y="61" width="2.1" height="5.6" fill="url(#gsq)"/><rect x="59" y="61" width="2.1" height="5.6" fill="url(#gsq)"/>
<!-- step -->
<rect x="76.2" y="58.4" width="2.5" height="11.2" fill="#a8a8a8" stroke="#8e8e8e" stroke-width="0.7"/>
<path d="M80 58.4L89 64L80 69.6z" fill="#a6a6a6" stroke="#8e8e8e" stroke-width="0.7"/>
<!-- stop -->
<circle cx="106" cy="64" r="7.3" fill="url(#gbtn)" stroke="url(#gring)" stroke-width="1.7"/>
<rect x="103" y="61" width="6.2" height="5.8" fill="url(#gsq)"/>
<!-- model icon -->
<g fill="none" stroke-width="1">
<path d="M128 59.5h3 M129 68.5h2.5 M143 64h2.5 M136.5 68.5h4v-3" stroke="#707070"/>
<path d="M137.5 59.5h3.5v3" stroke="#e0701a"/>
<rect x="130.7" y="57" width="6.6" height="4.8" fill="#f8a65a" stroke="#e8781a"/>
<rect x="138.6" y="62.2" width="4.6" height="3.4" fill="#fff" stroke="#7c7c7c"/>
<rect x="131.3" y="66.5" width="5.2" height="4" fill="#fff" stroke="#7c7c7c"/>
</g>
<!-- magnifier -->
<path d="M183.4 66.2L187.3 70" stroke="#2a2a2a" stroke-width="2.8" stroke-linecap="round"/>
<circle cx="179.3" cy="62.1" r="4.7" fill="#fbfbfb" stroke="#666" stroke-width="1.3"/>
<path d="M176.6 62.1h5.4 M179.3 59.4v5.4" stroke="#111" stroke-width="1.2"/>
<!-- icon A: autoscale -->
<rect x="218.5" y="56.5" width="15" height="15" fill="url(#gbox)" stroke="#3c3c3c"/>
<path d="M223.2 59.8L226 57.3L228.8 59.8 M223.2 68.2L226 70.7L228.8 68.2" fill="none" stroke="#1c1c1c" stroke-width="1.7"/>
<path d="M226 58.4v3.4 M226 66.2v3.4" stroke="#8a8a8a" stroke-width="1.3"/>
<!-- icon B: peak finder -->
<rect x="242.5" y="56.5" width="15" height="15" fill="#fff" stroke="#727272"/>
<path d="M245.5 58v13 M254.5 58v13" stroke="#e2e2e2" stroke-width="1"/>
<path d="M250 62.5C249.9 67 249 69.8 245.8 71L254.2 71C251 69.800 250.100 67 250 62.500z" fill="#c4dff0" stroke="#2d6cb0" stroke-width="1.1"/>
<path d="M247.2 59.300h5.600L250.500 63h-1z" fill="#ffcf1e" stroke="#c88a28" stroke-width="0.9"/>
<!-- icon C: ruler -->
<rect x="266.5" y="56.5" width="15" height="15" fill="url(#gbox2)" stroke="#7a7a7a"/>
<path d="M277.5 56.9L281.6 61.3L271.3 71.3L267.2 67.1z" fill="url(#grul)" stroke="#2a2a2a" stroke-width="1.1" stroke-dasharray="1.5 0.5"/>
<path d="M272.4 67.9l0.8 -0.8 M274.5 65.9l1 -1 M276.6 63.8l0.8 -0.8 M278.6 61.8l1 -1" stroke="#2a4a6a" stroke-width="1"/>
<!-- icon D: channel -->
<rect x="290.5" y="56.500" width="15" height="15" fill="#fff" stroke="#727272"/>
<path d="M291 67.500h2c0.800 0 1 -0.400 1 -1.200v-5c0 -1.600 0.800 -2.500 1.800 -2.900h5.400c1 0.400 1.800 1.300 1.800 2.900v5c0 0.800 0.200 1.200 1 1.200h1.500v3.500h-14.500z" fill="#dde9f1"/>
<rect x="296" y="57" width="5" height="14" fill="#ffb400"/><path d="M296.200 57v14 M300.800 57v14" stroke="#de7a24" stroke-width="0.9"/>
<path d="M291 67.500h2c0.800 0 1 -0.400 1 -1.200v-5c0 -1.600 0.800 -2.500 1.800 -2.900l0.900 0.900 0.900 -0.900 0.900 0.900 0.900 -0.900 0.900 0.900 0.900 -0.900c1 0.400 1.800 1.300 1.800 2.900v5c0 0.800 0.200 1.200 1 1.200h1.500" fill="none" stroke="#1a5aa8" stroke-width="1.100"/>
<!-- icon E: spectrum with peaks -->
<rect x="315" y="57" width="14" height="14" fill="#fff"/>
<path d="M315 67.200l1.200 1 1.300 -1.200 1.200 -0.400h1.400l1.300 1.600 1.300 -1.300h1.200l1.200 1.300 1.300 -1.200 1.300 0.600 1.300 0.600v3h-14z" fill="#cde3ee"/>
<path d="M315 67.200l1.200 1 1.300 -1.200 1.200 -0.400h0.800v-8.600v8.600h0.600l1.300 1.600 1.300 -1.300h0.400v-3v3h0.800l1.200 1.300 1.300 -1.200 1.300 0.600 1.300 0.600" fill="none" stroke="#17579c" stroke-width="1.100"/>
<path d="M321 58.300h1 M323 58.300h1 M325.200 58.300h2.800 M326.100 60.500h1 M326.100 62.400h1 M325.200 64.500h2.800" stroke="#cf5f1c" stroke-width="1"/>
<rect x="314.500" y="56.500" width="15" height="15" fill="none" stroke="#505050"/>
<!-- icon F: ccdf -->
<rect x="338.500" y="56.500" width="15" height="15" fill="#fff" stroke="#727272"/>
<path d="M339 58h1.500c3.500 1 6 6 7 13h-8.500z" fill="#d4e4f8"/>
<path d="M341 58v13 M344.300 58v13 M347.400 58v13 M350.600 58v13" stroke="#cfcfcf" stroke-width="0.900"/>
<path d="M339 58.300h2c3.500 1.500 6 6 6.800 12.700" fill="none" stroke="#2a62b0" stroke-width="1.200" stroke-dasharray="1.600 0.700"/>
<path d="M341 58.300c5 1.500 9.500 6 10.700 12.700" fill="none" stroke="#1e86e0" stroke-width="1.500" stroke-dasharray="1.800 0.700"/>
<!-- window controls -->
<rect x="741" y="16" width="8" height="2" fill="#d4d4d4" shape-rendering="crispEdges"/>
<path d="M763.500 11h7v6.500h-7z" fill="none" stroke="#b4b4b4" stroke-width="1" shape-rendering="crispEdges"/><rect x="763" y="10" width="8" height="2" fill="#b4b4b4" shape-rendering="crispEdges"/>
<path d="M785.600 10.800L792.400 17.400 M792.400 10.800L785.600 17.400" stroke="#d8d8d8" stroke-width="2.300"/>
<!-- menu right arrow -->
<path d="M789.300 36.700l1.300 -1.200l3.800 3.400" fill="none" stroke="#f6f6f8" stroke-width="2.600"/><path d="M796.300 34.700v5.600h-5.600z" fill="#f6f6f8"/><path d="M789.300 36.700l1.300 -1.200l3.800 3.400" fill="none" stroke="#111" stroke-width="1.300"/><path d="M796 35.300v4.700h-4.700z" fill="#000"/>
<!-- matlab icon -->
<rect x="7" y="6" width="15" height="15" fill="#f4f4f4"/>
<rect x="7" y="6" width="15" height="2" fill="#6aa5d8"/>
<g transform="translate(1.5,2.3) scale(0.92)"><path d="M9 14.500l4.500 -2.200 3 -3.800c0.800 -1 1.200 -0.500 1.600 0.500l2.400 7.500c-1 -1 -1.800 -1.800 -2.500 -0.800l-2.500 3c-1 -0.800 -2 -1.500 -3 -2z" fill="#d8481c"/>
<path d="M9 14.500l4.500 -2.200 1.500 1.800 -2.500 2.600z" fill="#3a7ec8"/>
<path d="M16.500 8.500c0.800 -1 1.200 -0.500 1.600 0.500l1 3.500c-1 -1 -1.500 -0.500 -2 1l-1 3.500 -1.200 2.200c0.500 -3 0.600 -7 1.600 -10.700z" fill="#f8a820"/>
</g>
</svg>

</div></body></html>
